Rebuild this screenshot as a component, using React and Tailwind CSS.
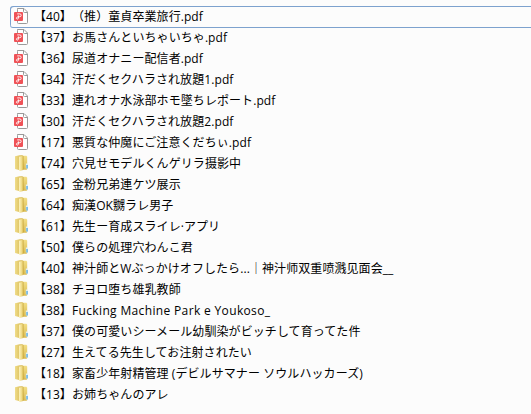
const files = [
    { type: 'pdf', count: 40, name: '（推）童貞卒業旅行.pdf' },
    { type: 'pdf', count: 37, name: 'お馬さんといちゃいちゃ.pdf' },
    { type: 'pdf', count: 36, name: '尿道オナニー配信者.pdf' },
    { type: 'pdf', count: 34, name: '汗だくセクハラされ放題1.pdf' },
    { type: 'pdf', count: 33, name: '連れオナ水泳部ホモ墜ちレポート.pdf' },
    { type: 'pdf', count: 30, name: '汗だくセクハラされ放題2.pdf' },
    { type: 'pdf', count: 17, name: '悪質な仲魔にご注意くだちぃ.pdf' },
    { type: 'folder', count: 74, name: '穴見せモデルくんゲリラ摄影中' },
    { type: 'folder', count: 65, name: '金粉兄弟連ケツ展示' },
    { type: 'folder', count: 64, name: '痴漢OK嬲ラレ男子' },
    { type: 'folder', count: 61, name: '先生ー育成スライレ·アプリ' },
    { type: 'folder', count: 50, name: '僕らの処理穴わんこ君' },
    { type: 'folder', count: 40, name: '神汁師とWぶっかけオフしたら...｜神汁师双重喷溅见面会__' },
    { type: 'folder', count: 38, name: 'チヨロ堕ち雄乳教師' },
    { type: 'folder', count: 38, name: 'Fucking Machine Park e Youkoso_', latin: true },
    { type: 'folder', count: 37, name: '僕の可愛いシーメール幼馴染がビッチして育ってた件' },
    { type: 'folder', count: 27, name: '生えてる先生してお注射されたい' },
    { type: 'folder', count: 18, name: '家畜少年射精管理 (デビルサマナー ソウルハッカーズ)' },
    { type: 'folder', count: 13, name: 'お姉ちゃんのアレ' },
];

function PdfIcon() {
    return (
        <svg className="w-4 h-4 mt-[2px] shrink-0" viewBox="0 0 16 16" fill="none">
            <path d="M3.5 .5h6.5l3.5 3.5v10.5a1 1 0 0 1-1 1h-8a1 1 0 0 1-1-1v-13a1 1 0 0 1 1-1z" fill="#fff" stroke="#9a9a9a" />
            <path d="M9.5 .5v3a1 1 0 0 0 1 1h3" stroke="#9a9a9a" />
            <rect x="0" y="4" width="9" height="9" rx="1" fill="#ef5257" />
            <path d="M3.2 5.9h2.6a1.4 1.4 0 0 1 0 2.8c-1.4 0-3.4.2-3.4 1.5 0 1.2 2 1.2 2-.2V7.4" stroke="#fff" strokeWidth=".9" />
        </svg>
    );
}

function FolderIcon() {
    return (
        <svg className="w-4 h-4 mt-[2px] shrink-0" viewBox="0 0 16 16">
            <defs>
                <linearGradient id="left" x1="0" x2="1" y1="0" y2="0">
                    <stop offset="0" stopColor="#f0dd8a" />
                    <stop offset="1" stopColor="#d3b34a" />
                </linearGradient>
                <linearGradient id="cover" x1="0" x2="1" y1="0" y2="0">
                    <stop offset="0" stopColor="#fdf3bd" />
                    <stop offset="1" stopColor="#e9cf6c" />
                </linearGradient>
                <linearGradient id="right" x1="0" x2="0" y1="0" y2="1">
                    <stop offset="0" stopColor="#f3df86" />
                    <stop offset="1" stopColor="#d9ba4e" />
                </linearGradient>
            </defs>
            <path d="M8 .8h4.4l.8.9v12.6l-.8.5H8z" fill="url(#right)" />
            <path d="M1 1.2 5.5.3h3.2v15H6L1 14z" fill="url(#left)" />
            <path d="M5 1.8 9 .8v13.8L5.9 15.9 5 15.2z" fill="url(#cover)" />
            <path d="M9.2 .9v13.7" stroke="#bf9b32" strokeWidth=".6" />
            <path d="M11.8 8.4h1.9v5.2h-1.9z" fill="#e3eff4" />
            <path d="M12.4 10h1.3v3.4h-1.3z" fill="#4fa6e0" />
        </svg>
    );
}

function FileRow({ file, focused }) {
    return (
        <li
            className={`flex items-start h-[21px] pl-[4px] ${
                focused ? 'rounded-l-[3px] shadow-[inset_1px_1px_0_#7da2ce,0_1px_0_#7da2ce]' : ''
            }`}
        >
            {file.type === 'pdf' ? <PdfIcon /> : <FolderIcon />}
            <span className="flex ml-[4px] whitespace-pre">
                <span className="w-[38px]">【{file.count}】</span>
                <span className={file.latin ? 'tracking-[0.35px]' : 'tracking-[0.08px]'}>{file.name}</span>
            </span>
        </li>
    );
}

export default function App() {
    return (
        <div className="w-[531px] h-[414px] overflow-hidden bg-[#fcfcfc] pt-[6px] pl-[10px] text-black text-[12px] leading-[21px] font-['Open_Sans','Noto_Sans_CJK_SC',sans-serif]">
            <ul className="w-[540px]">
                {files.map((file, i) => (
                    <FileRow key={i} file={file} focused={i === 0} />
                ))}
            </ul>
        </div>
    );
}
